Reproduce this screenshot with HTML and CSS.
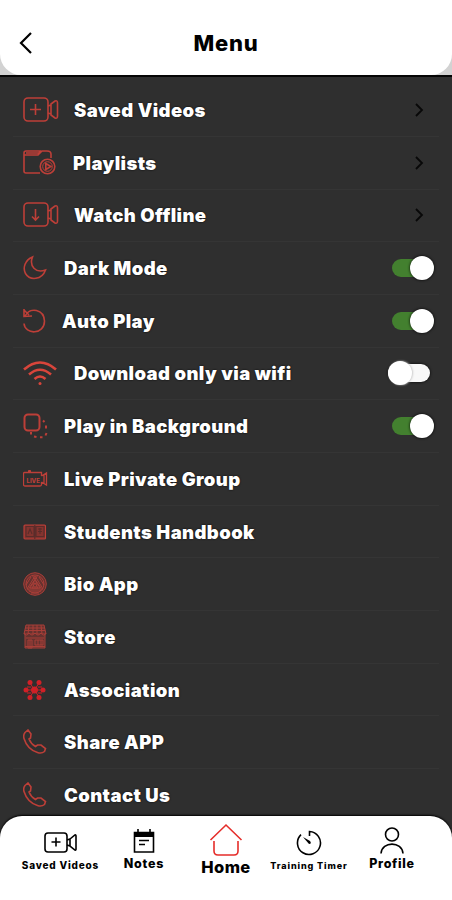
FILE: index.html
```
<!DOCTYPE html>
<html lang="en">
<head>
<meta charset="utf-8">
<title>Menu</title>
<link rel="stylesheet" href="styles.css">
</head>
<body>
<div class="screen">
  <header class="header">
    <div class="header-card">
      <svg class="back" width="16" height="24" viewBox="0 0 16 24"><path d="M13 2 3 12 13 22"/></svg>
      <h1>Menu</h1>
    </div>
  </header>
  <main class="list">
    <div class="row wide">
      <svg class="icon" width="36" height="26" viewBox="0 0 36 26"><rect x="1" y="1" width="24" height="23" rx="4"/><path d="M12.500 7v11M7 12.500h11M25 9l3-1M25 16l3 1M28 7l4-3q2.500-1 2.500 2v13q0 3-2.500 2l-4-3z"/></svg>
      <span class="label">Saved Videos</span>
      <svg class="chevron" width="12" height="16" viewBox="0 0 12 16"><path d="M3 2l6 6-6 6"/></svg>
    </div>
    <div class="row wide list-row">
      <svg class="icon" width="36" height="26" viewBox="0 0 36 26"><path d="M17 23H3q-2 0-2-2V3q0-2 2-2h14l-2 4H1M15 5l4-4h5q4 0 4 3v4M3 3h13"/><circle cx="24.500" cy="16.500" r="7.300"/><circle cx="24.500" cy="16.500" r="4.800" stroke-width="1"/><path d="M22.800 13.500v6l5-3z"/></svg>
      <span class="label">Playlists</span>
      <svg class="chevron" width="12" height="16" viewBox="0 0 12 16"><path d="M3 2l6 6-6 6"/></svg>
    </div>
    <div class="row wide">
      <svg class="icon" width="36" height="26" viewBox="0 0 36 26"><rect x="1" y="1" width="24" height="23" rx="4"/><path d="M12.500 7v11M9 14.500l3.500 3.500 3.500-3.500M25 9l3-1M25 16l3 1M28 7l4-3q2.500-1 2.500 2v13q0 3-2.500 2l-4-3z"/></svg>
      <span class="label">Watch Offline</span>
      <svg class="chevron" width="12" height="16" viewBox="0 0 12 16"><path d="M3 2l6 6-6 6"/></svg>
    </div>
    <div class="row">
      <svg class="icon" width="25" height="26" viewBox="0 0 25 26"><path d="M9.500 2C2 5-.500 13 2.500 18.500c4.500 7.500 16.500 6.500 20-3.500C12.500 18.500 6 11 9.500 2z"/></svg>
      <span class="label">Dark Mode</span>
      <span class="switch on"></span>
    </div>
    <div class="row auto">
      <svg class="icon" width="25" height="26" viewBox="0 0 25 26"><path d="M2 8C7-1.500 21 1 21.500 13 21.500 27 2 27 1 15.500M1 1v7.500l8-.500M1 2l5 5"/></svg>
      <span class="label">Auto Play</span>
      <span class="switch on"></span>
    </div>
    <div class="row wide">
      <svg class="icon wifi" width="36" height="26" viewBox="0 0 36 26"><path d="M1 9.500Q17-4.500 33 9.500M6 14.500q11-9.500 22 0M11.500 19q5.500-5 11 0"/><circle class="solid" cx="17" cy="23.500" r="1.500"/></svg>
      <span class="label">Download only via wifi</span>
      <span class="switch off"></span>
    </div>
    <div class="row play">
      <svg class="icon" width="25" height="26" viewBox="0 0 25 26"><rect x="1.500" y="1.500" width="15" height="16" rx="3.500" stroke-width="2"/><path stroke-width="2" d="M8 19v2.500M11 23.500l2.500 .500M17 24.200h2.500M22.500 22.500l1-2.500M23 15.500v-3M21.500 9l-1.500-1.500"/></svg>
      <span class="label">Play in Background</span>
      <span class="switch on"></span>
    </div>
    <div class="row">
      <svg class="icon live" width="25" height="26" viewBox="0 0 25 26"><path d="M18.500 10V6.500h-17q-1 0-1 1v11q0 1.500 1.500 1.500h15q1.500 0 1.500-1.500V16M18.500 10l5-3v12l-5-3M21 9v8M6.500 4v3M5 5h3"/><text x="3.500" y="17">LIVE</text></svg>
      <span class="label">Live Private Group</span>
    </div>
    <div class="row">
      <svg class="icon book" width="25" height="26" viewBox="0 0 25 26"><rect class="tint" x="1" y="6" width="21.500" height="14" rx="1"/><path d="M3 7.500h8v10H3zM13 7.500h8v10h-8zM11.800 6v14M5 15l2-5 2 5M15 10h4M15 12.500h4M17 9v6"/></svg>
      <span class="label">Students Handbook</span>
    </div>
    <div class="row">
      <svg class="icon dense" width="25" height="26" viewBox="0 0 25 26"><circle class="tint" cx="12" cy="13" r="11.300"/><circle cx="12" cy="13" r="9"/><path d="M12 5 4 18h16zM12 9l-5 8h10zM12 12l-3 5h6zM8 6l-5 8M16 6l5 8M6 20h12M9 4l9 13M15 4L6 17M8 22h8"/><circle cx="12" cy="14" r="2"/></svg>
      <span class="label">Bio App</span>
    </div>
    <div class="row">
      <svg class="icon dense" width="25" height="26" viewBox="0 0 25 26"><path class="tint" d="M3 1h18l2 9H1z"/><path class="tint" d="M2 10v14h20V10"/><path d="M2 4h20M2 6.500h20M6 1L5 10M10 1v9M14 1v9M18 1l1 9M1 9q2.500 4 5 0 3 4 6 0 3 4 6 0 2.500 4 5 0M3 14h18M5 16h4v8H5zM12 16h8v5h-8zM15 16v5M18 16v5M2 22.500h20M7 16v8"/></svg>
      <span class="label">Store</span>
    </div>
    <div class="row">
      <svg class="icon assoc" width="25" height="26" viewBox="0 0 25 26"><circle cx="11.500" cy="13" r="3.500"/><circle cx="7" cy="5.500" r="2.500"/><circle cx="16" cy="5.500" r="2.500"/><circle cx="3" cy="13" r="2.500"/><circle cx="20" cy="13" r="2.500"/><circle cx="7" cy="20.500" r="2.500"/><circle cx="16" cy="20.500" r="2.500"/><path d="m7 6 9 14M16 6 7 20M3 13h17M4 10h4M15 10h4M4 16h4M15 16h4"/></svg>
      <span class="label">Association</span>
    </div>
    <div class="row">
      <svg class="icon" width="25" height="26" viewBox="0 0 25 26"><path d="M2 3.500 5 1l3 4-.500 4-1.500 1q2 5 6.500 7.500l2-1.500h3.500l4.500 3.500-1 3q-3 2.500-7 1C8 21.500 3 16 1 9.500Q0 6 2 3.500z"/></svg>
      <span class="label">Share APP</span>
    </div>
    <div class="row">
      <svg class="icon" width="25" height="26" viewBox="0 0 25 26"><path d="M2 3.500 5 1l3 4-.500 4-1.500 1q2 5 6.500 7.500l2-1.500h3.500l4.500 3.500-1 3q-3 2.500-7 1C8 21.500 3 16 1 9.500Q0 6 2 3.500z"/></svg>
      <span class="label">Contact Us</span>
    </div>
  </main>
  <nav class="tabs">
    <div class="tab saved">
      <svg width="34" height="22" viewBox="0 0 34 22"><rect x="1" y="1" width="22" height="19" rx="3"/><path d="M12 5.500v9M7.500 10h9M23 8l3-1M23 13l3 1M26 7l5-4q1-.500 1 1v13q0 1.500-1 1l-5-4z"/></svg>
      <span>Saved Videos</span>
    </div>
    <div class="tab notes">
      <svg width="22" height="24" viewBox="0 0 22 24"><path d="M1.500 3.500h19V23h-19zM5 0v4M17 0v4M6 11.500h10M6 15.500h6"/><path class="ink" d="M1 3h20v5H1z"/></svg>
      <span>Notes</span>
    </div>
    <div class="tab home">
      <svg width="34" height="34" viewBox="0 0 34 34"><path d="M1.500 17 17 2l15.500 15M5 18v10q0 4 4 4h16q4 0 4-4V18"/></svg>
      <span>Home</span>
    </div>
    <div class="tab timer">
      <svg width="26" height="26" viewBox="0 0 26 26"><path d="M13.500 6V1.500A11.500 11.500 0 1 1 5 4.700"/><path class="ink" d="m7 7 7 4q2 3-1 3z"/></svg>
      <span>Training Timer</span>
    </div>
    <div class="tab profile">
      <svg width="24" height="27" viewBox="0 0 24 27"><circle cx="12" cy="7.500" r="6.500"/><path d="M1 26.500C2 14 22 14 23 26.500"/></svg>
      <span>Profile</span>
    </div>
  </nav>
</div>
</body>
</html>
```
FILE: styles.css
```
* { box-sizing: border-box; }
body { margin: 0; font-family: Inter, "Liberation Sans", sans-serif; }
svg { fill: none; stroke: currentColor; stroke-width: 1.6; flex: none; display: block; }
.screen { width: 452px; height: 900px; overflow: hidden; background: #2f2f2f; display: flex; flex-direction: column; }
.header { height: 77px; background: #d2d2d2; border-bottom: 2px solid #050505; flex: none; }
.header-card { height: 75px; background: #fff; border-radius: 0 0 21px 21px; display: grid; grid-template-columns: 60px 1fr 60px; align-items: center; padding-top: 11px; }
.back { margin-left: 18px; stroke-width: 2.2; }
h1 { margin: 0; text-align: center; font-size: 22px; line-height: 28px; font-weight: 800; letter-spacing: .8px; }
.list { flex: 1; min-height: 0; overflow: hidden; padding: 7.200px 13px 0; }
.row { height: 52.700px; display: flex; align-items: center; padding-left: 10px; border-bottom: 1px solid #353535; color: #fff; }
.icon { color: #bd3f38; margin-right: 16px; }
.wide .icon { margin-right: 15px; }
.list-row .icon { margin-right: 14px; }
.auto .icon { margin-right: 14px; }
.label { font-size: 18.500px; line-height: 24px; font-weight: 900; letter-spacing: .4px; white-space: nowrap; text-shadow: 0 0 2px #000; }
.chevron { margin-left: auto; margin-right: 14px; color: #080808; stroke-width: 1.8; }
.wifi { color: #d8453b; stroke-width: 2.6; }
.solid { fill: currentColor; stroke: none; }
.tint { fill: #83342f; }
.live { stroke-width: 1.3; }
.live text { fill: currentColor; stroke: none; font: 800 6px Inter, sans-serif; }
.book { stroke-width: 1.1; }
.book path { stroke: #5a2c2a; }
.dense { stroke-width: 1; color: #a83e38; }
.dense .tint { fill: #65322f; }
.assoc { color: #cf2027; stroke-width: 1; }
.assoc circle { fill: currentColor; stroke: none; }
.switch { width: 39px; height: 18px; margin-left: auto; margin-right: 7px; border-radius: 9px; background: #43802f; display: flex; align-items: center; }
.switch::after { content: ""; width: 24px; height: 24px; flex: none; border-radius: 50%; background: #fff; box-shadow: 0 0 3px #000; }
.switch.on { justify-content: flex-end; margin-right: 5px; width: 42px; }
.switch.off { background: #f8f8f8; box-shadow: 0 0 3px #000; width: 42px; margin-right: 9px; }
.switch.off::after { box-shadow: 1px 0 2px #ccc; }
.tabs { height: 84px; background: #fff; border-radius: 22px 22px 0 0; box-shadow: 0 -1px 2px #000; flex: none; display: grid; grid-template-columns: 101px 66px 98px 68px 98px; padding-left: 10px; color: #000; }
.tab { display: flex; flex-direction: column; align-items: center; white-space: nowrap; font-weight: 800; line-height: 16px; }
.ink { fill: currentColor; stroke: none; }
.saved { padding-top: 16px; font-size: 10px; letter-spacing: .8px; }
.saved span { margin-top: 3px; }
.notes { padding-top: 13px; font-size: 12.500px; letter-spacing: .8px; }
.notes span { margin-top: 3px; }
.home { padding-top: 7px; font-size: 16.500px; letter-spacing: .4px; }
.home svg { color: #e52d2a; }
.home span { margin-top: 2px; }
.timer { padding-top: 14px; font-size: 9px; letter-spacing: .9px; }
.timer span { margin-top: 2px; }
.profile { padding-top: 11px; font-size: 12.500px; letter-spacing: .7px; }
.profile span { margin-top: 2px; }
```
